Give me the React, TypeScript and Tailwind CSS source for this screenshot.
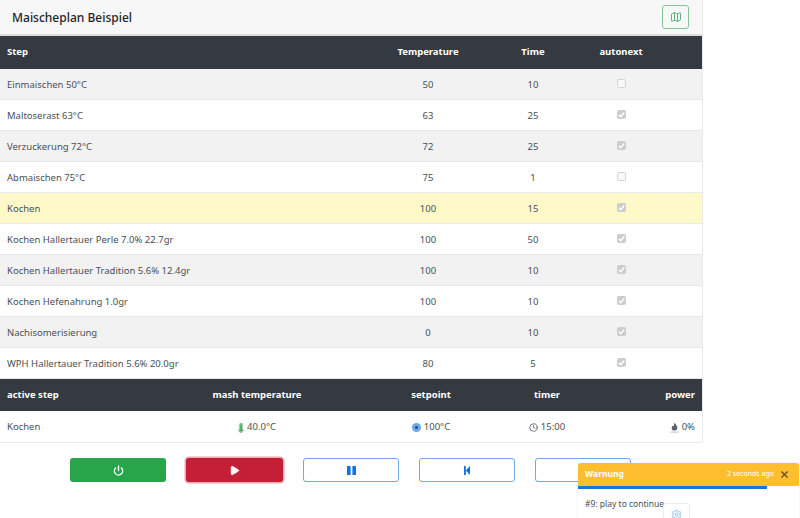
import { Map as MapIcon, Play, Power, Clock, Settings, X } from 'lucide-react'

const STEPS = [
  { name: 'Einmaischen 50°C', temp: 50, time: 10, auto: false },
  { name: 'Maltoserast 63°C', temp: 63, time: 25, auto: true },
  { name: 'Verzuckerung 72°C', temp: 72, time: 25, auto: true },
  { name: 'Abmaischen 75°C', temp: 75, time: 1, auto: false },
  { name: 'Kochen', temp: 100, time: 15, auto: true },
  { name: 'Kochen Hallertauer Perle 7.0% 22.7gr', temp: 100, time: 50, auto: true },
  { name: 'Kochen Hallertauer Tradition 5.6% 12.4gr', temp: 100, time: 10, auto: true },
  { name: 'Kochen Hefenahrung 1.0gr', temp: 100, time: 10, auto: true },
  { name: 'Nachisomerisierung', temp: 0, time: 10, auto: true },
  { name: 'WPH Hallertauer Tradition 5.6% 20.0gr', temp: 80, time: 5, auto: true },
]

function Checkbox({ checked }: { checked: boolean }) {
  if (!checked) {
    return <span className="block h-[9px] w-[9px] rounded-[2px] border border-[#d4d4d4] bg-[#f8f8f8]" />
  }
  return (
    <span className="flex h-[9px] w-[9px] items-center justify-center rounded-[2px] bg-[#cdcdcd]">
      <svg viewBox="0 0 10 10" className="h-[9px] w-[9px]" fill="none" stroke="#fff" strokeWidth="1.6">
        <path d="M2 5.2 4.2 7.4 8 2.8" />
      </svg>
    </span>
  )
}

function StepRow({ step, index }: { step: (typeof STEPS)[number]; index: number }) {
  const active = step.name === 'Kochen'
  const bg = active ? 'bg-[#fff8c9]' : index % 2 === 0 ? 'bg-[#f2f2f2]' : 'bg-white'
  return (
    <div className={`grid h-[31px] grid-cols-[373px_110px_100px_76px_44px] items-center border-b border-[#e6e8ea] text-[#495057] ${bg}`}>
      <span className="pt-[2px] pl-[7px]">{step.name}</span>
      <span className="pt-[2px] text-center">{step.temp}</span>
      <span className="pt-[2px] text-center">{step.time}</span>
      <span className="flex justify-center pb-[1px]">
        <Checkbox checked={step.auto} />
      </span>
    </div>
  )
}

export default function App() {
  return (
    <div className="relative h-[518px] w-[800px] overflow-hidden bg-white font-['Noto_Sans',sans-serif] text-[9.5px]">
      <div className="w-[703px] overflow-hidden rounded-br-[4px] border-r border-b border-[#e6e8ea]">
        {/* Header */}
        <div className="flex h-[36px] items-center justify-between border-b-2 border-[#dcdcdc] bg-[#f7f7f7] pr-[13px] pl-[12px]">
          <h1 className="pt-[1px] text-[12px] font-medium text-[#212529]">Maischeplan Beispiel</h1>
          <button className="flex h-[24px] w-[27px] items-center justify-center rounded-[3px] border border-[#7fc795] text-[#5fb27a]">
            <MapIcon size={12} />
          </button>
        </div>

        {/* Steps */}
        <div className="grid h-[33px] grid-cols-[373px_110px_100px_76px_44px] items-center bg-[#343a40] font-bold text-white">
          <span className="pl-[7px]">Step</span>
          <span className="text-center">Temperature</span>
          <span className="text-center">Time</span>
          <span className="text-center">autonext</span>
        </div>
        {STEPS.map((step, i) => (
          <StepRow key={step.name + i} step={step} index={i} />
        ))}

        {/* Status */}
        <div className="grid h-[32px] grid-cols-[150px_214px_134px_98px_106px] items-center bg-[#343a40] font-bold text-white">
          <span className="pl-[7px]">active step</span>
          <span className="text-center">mash temperature</span>
          <span className="text-center">setpoint</span>
          <span className="text-center">timer</span>
          <span className="pr-[7px] text-right">power</span>
        </div>
        <div className="grid h-[31px] grid-cols-[150px_214px_134px_98px_106px] items-center pt-[2px] text-[#495057]">
          <span className="pl-[7px]">Kochen</span>
          <span className="flex items-center justify-center gap-[3px]">
            <svg viewBox="0 0 8 14" className="h-[11px] w-[6px]">
              <path d="M4 .5a2.4 2.4 0 0 1 2.4 2.4v5.4a3.4 3.4 0 1 1-4.8 0V2.9A2.4 2.4 0 0 1 4 .5Z" fill="#86c496" />
              <circle cx="4" cy="10.5" r="1.3" fill="#3e8f57" />
              <rect x="3.4" y="3" width="1.2" height="6" fill="#3e8f57" />
            </svg>
            40.0°C
          </span>
          <span className="flex items-center justify-center gap-[3px]">
            <span className="flex h-[9px] w-[9px] items-center justify-center rounded-full bg-[#6ea6e8]">
              <span className="h-[3px] w-[3px] rounded-full bg-[#1d4f91]" />
            </span>
            100°C
          </span>
          <span className="flex items-center justify-center gap-[3px]">
            <Clock size={9} strokeWidth={2} />
            15:00
          </span>
          <span className="flex items-center justify-end gap-[3px] pr-[7px]">
            <svg viewBox="0 0 10 12" className="h-[11px] w-[9px]">
              <path d="M5.4.5C6 3 8.2 4 8.2 6.6A3.1 3.1 0 0 1 5 9.4a3 3 0 0 1-3.1-2.9c0-1.3.8-2 1.3-2.8.3.7.6 1 1 1.2.4-1.5.1-2.8 1.2-4.4Z" fill="#5c6268" />
              <rect x="0.5" y="10.6" width="9" height="1" fill="#b4b7ba" />
            </svg>
            0%
          </span>
        </div>
      </div>

      {/* Controls */}
      <div className="mt-[15px] flex w-[703px] gap-[20px] pl-[70px]">
        <button className="flex h-[24px] w-[96px] items-center justify-center rounded-[3px] bg-[#28a54b] text-white">
          <Power size={11} strokeWidth={3} />
        </button>
        <button className="flex h-[24px] w-[97px] items-center justify-center rounded-[3px] bg-[#c51f37] text-white shadow-[0_0_0_1.5px_#f3a6b0]">
          <Play size={11} fill="currentColor" />
        </button>
        <button className="flex h-[24px] w-[96px] items-center justify-center rounded-[3px] border border-[#6ea8e8] text-[#0d72e8]">
          <svg viewBox="0 0 9 9" className="h-[9px] w-[9px]" fill="currentColor">
            <rect x="0" y="0" width="3.6" height="9" rx="0.5" />
            <rect x="5.4" y="0" width="3.6" height="9" rx="0.5" />
          </svg>
        </button>
        <button className="flex h-[24px] w-[96px] items-center justify-center rounded-[3px] border border-[#6ea8e8] text-[#0d72e8]">
          <svg viewBox="0 0 6 9" className="h-[9px] w-[6px]" fill="currentColor">
            <rect x="0" y="0" width="1.8" height="9" />
            <path d="M6 0v9L1.8 4.5Z" />
          </svg>
        </button>
        <button className="h-[24px] w-[96px] rounded-[3px] border border-[#6ea8e8]" />
      </div>

      {/* Toast */}
      <div className="absolute top-[463px] left-[578px] h-[70px] w-[221px] rounded-[3px] bg-white/95 shadow-[0_0_2px_rgba(0,0,0,0.12)]">
        <div className="flex h-[23px] items-center justify-between rounded-t-[3px] bg-[#ffbe2e] pr-[9px] pl-[7px]">
          <span className="text-[8.5px] font-bold text-white">Warnung</span>
          <span className="flex items-center gap-[5px] text-[7px] text-white">
            2 seconds ago
            <X size={11} strokeWidth={2.5} className="text-[#5c4a16]" />
          </span>
        </div>
        <div className="h-[3px] w-[189px] bg-[#1a73e0]" />
        <p className="pt-[9px] pl-[7px] text-[8.5px] text-[#495057]">#9: play to continue</p>
        <div className="absolute top-[40px] left-[85px] flex h-[26px] w-[27px] justify-center rounded-[3px] border border-[#e8eef6] pt-[5px] text-[#bcd4ef]">
          <Settings size={11} strokeWidth={3} />
        </div>
      </div>
    </div>
  )
}
